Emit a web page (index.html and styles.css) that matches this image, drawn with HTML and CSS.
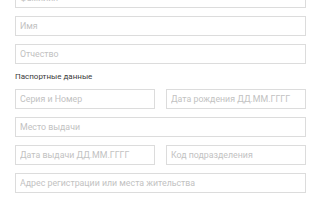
FILE: index.html
```html
<!DOCTYPE html>
<html lang="ru">
<head>
    <meta charset="UTF-8">
    <meta name="viewport" content="width=device-width, initial-scale=1.0">
    <title>Анкета</title>
    <link rel="stylesheet" href="styles.css">
</head>
<body>

<div class="form">
    <input class="field" type="text" placeholder="Фамилия">
    <input class="field" type="text" placeholder="Имя">
    <input class="field" type="text" placeholder="Отчество">

    <div class="section-title">Паспортные данные</div>

    <div class="row">
        <input class="field" type="text" placeholder="Серия и Номер">
        <input class="field" type="text" placeholder="Дата рождения ДД.ММ.ГГГГ">
    </div>
    <input class="field" type="text" placeholder="Место выдачи">
    <div class="row">
        <input class="field" type="text" placeholder="Дата выдачи ДД.ММ.ГГГГ">
        <input class="field" type="text" placeholder="Код подразделения">
    </div>
    <input class="field" type="text" placeholder="Адрес регистрации или места жительства">
</div>

</body>
</html>
```

FILE: styles.css
```css
body {
    font-family: Roboto, "Noto Sans", Arial, sans-serif;
    background-color: #fff;
    margin: 0;
    padding: 0;
    overflow: hidden;
}
.form {
    width: 291px;
    margin: -12px 0 0 15px;
    display: flex;
    flex-direction: column;
    gap: 8px;
}
.field {
    display: block;
    width: 100%;
    height: 20px;
    box-sizing: border-box;
    margin: 0;
    padding: 0 4px;
    border: 1px solid #dcdcdc;
    border-radius: 0;
    font-family: inherit;
    font-size: 8.8px;
    color: #333;
    background: #fff;
    outline: none;
}
.field::placeholder {
    color: #c2c2c2;
}
.section-title {
    font-size: 8px;
    color: #3a3a3a;
    height: 9px;
    line-height: 9px;
}
.row {
    display: grid;
    grid-template-columns: 140px 140px;
    column-gap: 11px;
}
```
